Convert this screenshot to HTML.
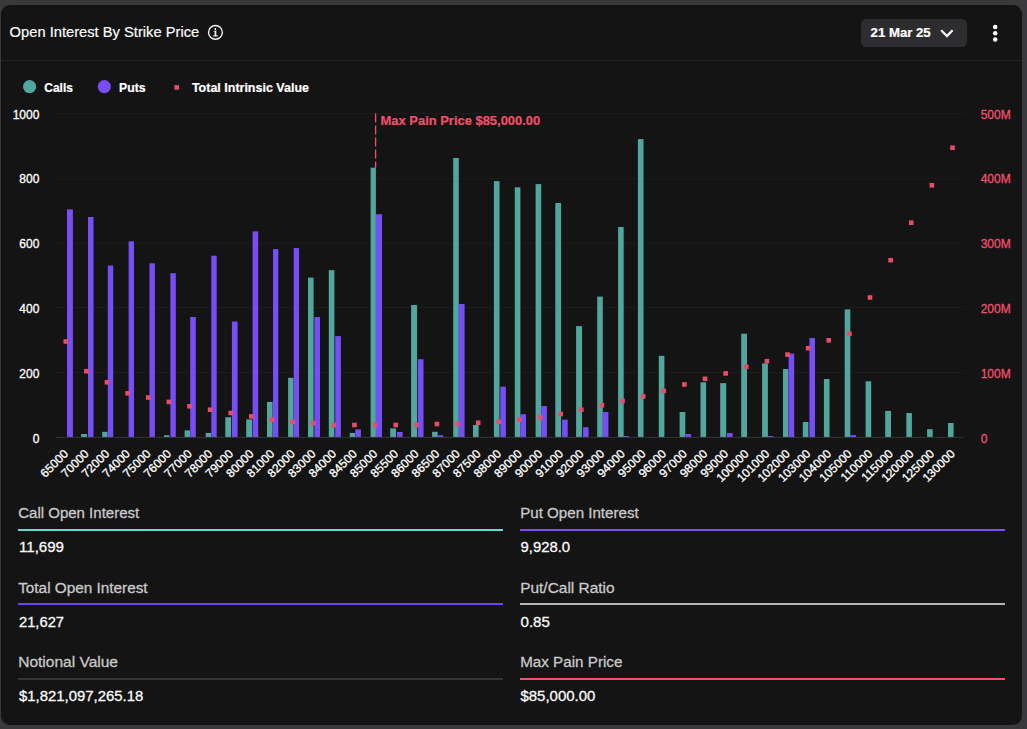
<!DOCTYPE html><html><head><meta charset="utf-8"><title>Open Interest By Strike Price</title>
<style>html,body{margin:0;padding:0;background:#39393b;}body{width:1027px;height:729px;overflow:hidden;font-family:"Liberation Sans",sans-serif;}svg{display:block;font-family:"Liberation Sans",sans-serif;}</style></head><body>
<svg width="1027" height="729" viewBox="0 0 1027 729">
<rect x="0" y="0" width="1027" height="729" fill="#39393b"/>
<rect x="1" y="5" width="1021" height="720" rx="9" ry="9" fill="#141414"/>
<rect x="1" y="60" width="1021" height="1" fill="#232325"/>
<text x="9.6" y="36.7" font-size="15.3" fill="#fafafa" font-weight="normal" text-anchor="start" textLength="189.6" lengthAdjust="spacingAndGlyphs"  stroke="#fafafa" stroke-width="0.2">Open Interest By Strike Price</text>
<g fill="none" stroke="#f2f2f2"><circle cx="215.45" cy="32.4" r="6.9" stroke-width="1.4"/></g>
<g fill="#f2f2f2"><circle cx="215.3" cy="29.0" r="1.0"/><path d="M213.6 30.9 L216.3 30.6 L216.3 35.3 L217.8 35.5 L217.8 36.4 L213.1 36.4 L213.1 35.5 L214.6 35.3 L214.6 31.7 L213.6 31.6 Z"/></g>
<rect x="861" y="19" width="106" height="28" rx="5.5" fill="#2d2d2f"/>
<text x="870.6" y="37.4" font-size="12.6" fill="#fff" font-weight="bold" text-anchor="start" textLength="60.1" lengthAdjust="spacingAndGlyphs"  stroke="#fff" stroke-width="0.2">21 Mar 25</text>
<path d="M941.2 30.3 L946.9 36.1 L952.6 30.3" fill="none" stroke="#fff" stroke-width="2.2" stroke-linecap="butt" stroke-linejoin="miter"/>
<circle cx="995.2" cy="26.9" r="2.25" fill="#fff"/>
<circle cx="995.2" cy="33.2" r="2.25" fill="#fff"/>
<circle cx="995.2" cy="39.6" r="2.25" fill="#fff"/>
<circle cx="29.6" cy="86.6" r="6.6" fill="#51A69E"/>
<text x="44.3" y="92.1" font-size="12.5" fill="#fff" font-weight="bold" text-anchor="start" textLength="28.6" lengthAdjust="spacingAndGlyphs"  stroke="#fff" stroke-width="0.2">Calls</text>
<circle cx="104.3" cy="86.6" r="6.6" fill="#774EF6"/>
<text x="119" y="92.1" font-size="12.5" fill="#fff" font-weight="bold" text-anchor="start" textLength="26.6" lengthAdjust="spacingAndGlyphs"  stroke="#fff" stroke-width="0.2">Puts</text>
<rect x="174.4" y="85.1" width="4.6" height="4.6" fill="#E84C66"/>
<text x="191.9" y="92.1" font-size="12.5" fill="#fff" font-weight="bold" text-anchor="start" textLength="117.1" lengthAdjust="spacingAndGlyphs"  stroke="#fff" stroke-width="0.2">Total Intrinsic Value</text>
<rect x="56.0" y="113.10" width="908.0" height="1" fill="#1d1d1d"/>
<text x="39.4" y="119.0" font-size="12" fill="#ffffff" font-weight="normal" text-anchor="end"  stroke="#ffffff" stroke-width="0.3">1000</text>
<text x="980.7" y="119.3" font-size="12" fill="#F0506C" font-weight="normal" text-anchor="start"  stroke="#F0506C" stroke-width="0.3">500M</text>
<rect x="56.0" y="178.30" width="908.0" height="1" fill="#1d1d1d"/>
<text x="39.4" y="182.9" font-size="12" fill="#ffffff" font-weight="normal" text-anchor="end"  stroke="#ffffff" stroke-width="0.3">800</text>
<text x="980.7" y="182.7" font-size="12" fill="#F0506C" font-weight="normal" text-anchor="start"  stroke="#F0506C" stroke-width="0.3">400M</text>
<rect x="56.0" y="242.80" width="908.0" height="1" fill="#1d1d1d"/>
<text x="39.4" y="248.1" font-size="12" fill="#ffffff" font-weight="normal" text-anchor="end"  stroke="#ffffff" stroke-width="0.3">600</text>
<text x="980.7" y="248.0" font-size="12" fill="#F0506C" font-weight="normal" text-anchor="start"  stroke="#F0506C" stroke-width="0.3">300M</text>
<rect x="56.0" y="307.10" width="908.0" height="1" fill="#1d1d1d"/>
<text x="39.4" y="313.2" font-size="12" fill="#ffffff" font-weight="normal" text-anchor="end"  stroke="#ffffff" stroke-width="0.3">400</text>
<text x="980.7" y="313.3" font-size="12" fill="#F0506C" font-weight="normal" text-anchor="start"  stroke="#F0506C" stroke-width="0.3">200M</text>
<rect x="56.0" y="371.90" width="908.0" height="1" fill="#1d1d1d"/>
<text x="39.4" y="378.1" font-size="12" fill="#ffffff" font-weight="normal" text-anchor="end"  stroke="#ffffff" stroke-width="0.3">200</text>
<text x="980.7" y="378.1" font-size="12" fill="#F0506C" font-weight="normal" text-anchor="start"  stroke="#F0506C" stroke-width="0.3">100M</text>
<text x="39.4" y="442.9" font-size="12" fill="#ffffff" font-weight="normal" text-anchor="end"  stroke="#ffffff" stroke-width="0.3">0</text>
<text x="980.7" y="442.9" font-size="12" fill="#F0506C" font-weight="normal" text-anchor="start"  stroke="#F0506C" stroke-width="0.3">0</text>
<line x1="375.60" y1="113.6" x2="375.60" y2="168" stroke="#F0506C" stroke-width="1.3" stroke-dasharray="9 3"/>
<text x="380.6" y="125.2" font-size="12.5" fill="#F0506C" font-weight="bold" text-anchor="start" textLength="159.6" lengthAdjust="spacingAndGlyphs"  stroke="#F0506C" stroke-width="0.2">Max Pain Price $85,000.00</text>
<rect x="67.00" y="209.4" width="5.90" height="228.00" fill="#774EF6"/>
<rect x="81.10" y="434" width="6.00" height="3.40" fill="#51A69E"/>
<rect x="88.00" y="217" width="5.50" height="220.40" fill="#774EF6"/>
<rect x="102.20" y="431.8" width="5.40" height="5.60" fill="#51A69E"/>
<rect x="107.80" y="265.5" width="5.40" height="171.90" fill="#774EF6"/>
<rect x="128.60" y="241.3" width="5.40" height="196.10" fill="#774EF6"/>
<rect x="149.50" y="263.3" width="5.40" height="174.10" fill="#774EF6"/>
<rect x="163.90" y="435.2" width="5.50" height="2.20" fill="#51A69E"/>
<rect x="170.40" y="273.2" width="5.40" height="164.20" fill="#774EF6"/>
<rect x="184.60" y="430.4" width="5.40" height="7.00" fill="#51A69E"/>
<rect x="190.20" y="317" width="5.60" height="120.40" fill="#774EF6"/>
<rect x="205.70" y="433" width="5.40" height="4.40" fill="#51A69E"/>
<rect x="211.30" y="255.7" width="5.40" height="181.70" fill="#774EF6"/>
<rect x="225.30" y="417.2" width="5.80" height="20.20" fill="#51A69E"/>
<rect x="231.90" y="321.5" width="5.70" height="115.90" fill="#774EF6"/>
<rect x="246.20" y="419.4" width="5.80" height="18.00" fill="#51A69E"/>
<rect x="252.60" y="231.4" width="5.60" height="206.00" fill="#774EF6"/>
<rect x="267.00" y="401.9" width="5.60" height="35.50" fill="#51A69E"/>
<rect x="273.00" y="249.1" width="5.30" height="188.30" fill="#774EF6"/>
<rect x="288.10" y="377.8" width="5.40" height="59.60" fill="#51A69E"/>
<rect x="293.70" y="248.1" width="5.40" height="189.30" fill="#774EF6"/>
<rect x="308.00" y="277.6" width="5.60" height="159.80" fill="#51A69E"/>
<rect x="314.40" y="317.1" width="5.60" height="120.30" fill="#774EF6"/>
<rect x="328.80" y="270.2" width="5.60" height="167.20" fill="#51A69E"/>
<rect x="335.20" y="336.1" width="5.70" height="101.30" fill="#774EF6"/>
<rect x="349.70" y="433" width="5.40" height="4.40" fill="#51A69E"/>
<rect x="355.30" y="429.4" width="5.60" height="8.00" fill="#774EF6"/>
<rect x="370.60" y="167.7" width="5.30" height="269.70" fill="#51A69E"/>
<rect x="375.90" y="214.2" width="6.10" height="223.20" fill="#774EF6"/>
<rect x="390.20" y="428.4" width="5.80" height="9.00" fill="#51A69E"/>
<rect x="397.00" y="432" width="5.60" height="5.40" fill="#774EF6"/>
<rect x="411.10" y="305" width="6.00" height="132.40" fill="#51A69E"/>
<rect x="417.90" y="359.2" width="5.60" height="78.20" fill="#774EF6"/>
<rect x="432.10" y="431.8" width="5.60" height="5.60" fill="#51A69E"/>
<rect x="437.90" y="435.2" width="5.30" height="2.20" fill="#774EF6"/>
<rect x="453.20" y="158" width="5.60" height="279.40" fill="#51A69E"/>
<rect x="459.00" y="304" width="5.60" height="133.40" fill="#774EF6"/>
<rect x="473.00" y="425" width="5.60" height="12.40" fill="#51A69E"/>
<rect x="493.90" y="181.1" width="5.60" height="256.30" fill="#51A69E"/>
<rect x="500.30" y="386.7" width="5.60" height="50.70" fill="#774EF6"/>
<rect x="514.80" y="187.3" width="5.60" height="250.10" fill="#51A69E"/>
<rect x="520.40" y="414.2" width="5.60" height="23.20" fill="#774EF6"/>
<rect x="535.60" y="184.1" width="5.60" height="253.30" fill="#51A69E"/>
<rect x="541.20" y="406.1" width="5.70" height="31.30" fill="#774EF6"/>
<rect x="555.30" y="203" width="5.80" height="234.40" fill="#51A69E"/>
<rect x="562.10" y="419.6" width="5.60" height="17.80" fill="#774EF6"/>
<rect x="576.10" y="326.1" width="5.90" height="111.30" fill="#51A69E"/>
<rect x="583.00" y="427.2" width="5.60" height="10.20" fill="#774EF6"/>
<rect x="597.20" y="296.6" width="5.60" height="140.80" fill="#51A69E"/>
<rect x="602.80" y="412" width="5.60" height="25.40" fill="#774EF6"/>
<rect x="618.10" y="227" width="5.60" height="210.40" fill="#51A69E"/>
<rect x="623.70" y="436" width="5.30" height="1.40" fill="#774EF6"/>
<rect x="637.90" y="139.1" width="5.60" height="298.30" fill="#51A69E"/>
<rect x="658.80" y="355.8" width="5.60" height="81.60" fill="#51A69E"/>
<rect x="679.60" y="412" width="5.70" height="25.40" fill="#51A69E"/>
<rect x="685.50" y="434" width="5.60" height="3.40" fill="#774EF6"/>
<rect x="700.50" y="382.3" width="5.60" height="55.10" fill="#51A69E"/>
<rect x="720.20" y="383.1" width="6.00" height="54.30" fill="#51A69E"/>
<rect x="727.00" y="433" width="5.60" height="4.40" fill="#774EF6"/>
<rect x="741.20" y="333.7" width="5.80" height="103.70" fill="#51A69E"/>
<rect x="762.10" y="363.4" width="5.80" height="74.00" fill="#51A69E"/>
<rect x="767.90" y="436" width="5.50" height="1.40" fill="#774EF6"/>
<rect x="783.00" y="369" width="5.40" height="68.40" fill="#51A69E"/>
<rect x="788.60" y="353.6" width="5.60" height="83.80" fill="#774EF6"/>
<rect x="802.80" y="422" width="5.60" height="15.40" fill="#51A69E"/>
<rect x="809.40" y="338.1" width="5.60" height="99.30" fill="#774EF6"/>
<rect x="823.90" y="379" width="5.60" height="58.40" fill="#51A69E"/>
<rect x="844.70" y="309.4" width="5.60" height="128.00" fill="#51A69E"/>
<rect x="850.30" y="435" width="5.70" height="2.40" fill="#774EF6"/>
<rect x="865.60" y="381.3" width="5.60" height="56.10" fill="#51A69E"/>
<rect x="885.20" y="410.9" width="5.80" height="26.50" fill="#51A69E"/>
<rect x="906.30" y="413" width="5.60" height="24.40" fill="#51A69E"/>
<rect x="927.10" y="429.2" width="5.60" height="8.20" fill="#51A69E"/>
<rect x="948.00" y="423" width="5.60" height="14.40" fill="#51A69E"/>
<rect x="56.0" y="436.9" width="908.0" height="1" fill="#333333"/>
<rect x="63.45" y="339.20" width="4.6" height="4.6" fill="#E84C66"/>
<rect x="84.07" y="368.90" width="4.6" height="4.6" fill="#E84C66"/>
<rect x="104.69" y="380.00" width="4.6" height="4.6" fill="#E84C66"/>
<rect x="125.32" y="391.00" width="4.6" height="4.6" fill="#E84C66"/>
<rect x="145.94" y="395.20" width="4.6" height="4.6" fill="#E84C66"/>
<rect x="166.56" y="399.60" width="4.6" height="4.6" fill="#E84C66"/>
<rect x="187.18" y="404.00" width="4.6" height="4.6" fill="#E84C66"/>
<rect x="207.80" y="407.40" width="4.6" height="4.6" fill="#E84C66"/>
<rect x="228.43" y="410.70" width="4.6" height="4.6" fill="#E84C66"/>
<rect x="249.05" y="414.10" width="4.6" height="4.6" fill="#E84C66"/>
<rect x="269.67" y="417.30" width="4.6" height="4.6" fill="#E84C66"/>
<rect x="290.29" y="419.70" width="4.6" height="4.6" fill="#E84C66"/>
<rect x="310.91" y="420.70" width="4.6" height="4.6" fill="#E84C66"/>
<rect x="331.54" y="422.70" width="4.6" height="4.6" fill="#E84C66"/>
<rect x="352.16" y="422.70" width="4.6" height="4.6" fill="#E84C66"/>
<rect x="372.78" y="422.70" width="4.6" height="4.6" fill="#E84C66"/>
<rect x="393.40" y="422.70" width="4.6" height="4.6" fill="#E84C66"/>
<rect x="414.02" y="422.70" width="4.6" height="4.6" fill="#E84C66"/>
<rect x="434.65" y="421.70" width="4.6" height="4.6" fill="#E84C66"/>
<rect x="455.27" y="421.70" width="4.6" height="4.6" fill="#E84C66"/>
<rect x="475.89" y="420.50" width="4.6" height="4.6" fill="#E84C66"/>
<rect x="496.51" y="419.50" width="4.6" height="4.6" fill="#E84C66"/>
<rect x="517.13" y="417.30" width="4.6" height="4.6" fill="#E84C66"/>
<rect x="537.76" y="415.10" width="4.6" height="4.6" fill="#E84C66"/>
<rect x="558.38" y="411.70" width="4.6" height="4.6" fill="#E84C66"/>
<rect x="579.00" y="407.40" width="4.6" height="4.6" fill="#E84C66"/>
<rect x="599.62" y="403.00" width="4.6" height="4.6" fill="#E84C66"/>
<rect x="620.24" y="398.60" width="4.6" height="4.6" fill="#E84C66"/>
<rect x="640.87" y="394.20" width="4.6" height="4.6" fill="#E84C66"/>
<rect x="661.49" y="388.60" width="4.6" height="4.6" fill="#E84C66"/>
<rect x="682.11" y="382.20" width="4.6" height="4.6" fill="#E84C66"/>
<rect x="702.73" y="376.50" width="4.6" height="4.6" fill="#E84C66"/>
<rect x="723.35" y="371.10" width="4.6" height="4.6" fill="#E84C66"/>
<rect x="743.98" y="364.50" width="4.6" height="4.6" fill="#E84C66"/>
<rect x="764.60" y="358.90" width="4.6" height="4.6" fill="#E84C66"/>
<rect x="785.22" y="352.30" width="4.6" height="4.6" fill="#E84C66"/>
<rect x="805.84" y="345.90" width="4.6" height="4.6" fill="#E84C66"/>
<rect x="826.46" y="338.00" width="4.6" height="4.6" fill="#E84C66"/>
<rect x="847.09" y="331.40" width="4.6" height="4.6" fill="#E84C66"/>
<rect x="867.71" y="295.20" width="4.6" height="4.6" fill="#E84C66"/>
<rect x="888.33" y="257.90" width="4.6" height="4.6" fill="#E84C66"/>
<rect x="908.95" y="220.40" width="4.6" height="4.6" fill="#E84C66"/>
<rect x="929.57" y="183.00" width="4.6" height="4.6" fill="#E84C66"/>
<rect x="950.20" y="145.40" width="4.6" height="4.6" fill="#E84C66"/>
<text transform="translate(65.90 451.5) rotate(-45)" x="0" y="4.3" font-size="12" fill="#fff" stroke="#fff" stroke-width="0.3" text-anchor="end">65000</text>
<text transform="translate(86.52 451.5) rotate(-45)" x="0" y="4.3" font-size="12" fill="#fff" stroke="#fff" stroke-width="0.3" text-anchor="end">70000</text>
<text transform="translate(107.14 451.5) rotate(-45)" x="0" y="4.3" font-size="12" fill="#fff" stroke="#fff" stroke-width="0.3" text-anchor="end">72000</text>
<text transform="translate(127.77 451.5) rotate(-45)" x="0" y="4.3" font-size="12" fill="#fff" stroke="#fff" stroke-width="0.3" text-anchor="end">74000</text>
<text transform="translate(148.39 451.5) rotate(-45)" x="0" y="4.3" font-size="12" fill="#fff" stroke="#fff" stroke-width="0.3" text-anchor="end">75000</text>
<text transform="translate(169.01 451.5) rotate(-45)" x="0" y="4.3" font-size="12" fill="#fff" stroke="#fff" stroke-width="0.3" text-anchor="end">76000</text>
<text transform="translate(189.63 451.5) rotate(-45)" x="0" y="4.3" font-size="12" fill="#fff" stroke="#fff" stroke-width="0.3" text-anchor="end">77000</text>
<text transform="translate(210.25 451.5) rotate(-45)" x="0" y="4.3" font-size="12" fill="#fff" stroke="#fff" stroke-width="0.3" text-anchor="end">78000</text>
<text transform="translate(230.88 451.5) rotate(-45)" x="0" y="4.3" font-size="12" fill="#fff" stroke="#fff" stroke-width="0.3" text-anchor="end">79000</text>
<text transform="translate(251.50 451.5) rotate(-45)" x="0" y="4.3" font-size="12" fill="#fff" stroke="#fff" stroke-width="0.3" text-anchor="end">80000</text>
<text transform="translate(272.12 451.5) rotate(-45)" x="0" y="4.3" font-size="12" fill="#fff" stroke="#fff" stroke-width="0.3" text-anchor="end">81000</text>
<text transform="translate(292.74 451.5) rotate(-45)" x="0" y="4.3" font-size="12" fill="#fff" stroke="#fff" stroke-width="0.3" text-anchor="end">82000</text>
<text transform="translate(313.36 451.5) rotate(-45)" x="0" y="4.3" font-size="12" fill="#fff" stroke="#fff" stroke-width="0.3" text-anchor="end">83000</text>
<text transform="translate(333.99 451.5) rotate(-45)" x="0" y="4.3" font-size="12" fill="#fff" stroke="#fff" stroke-width="0.3" text-anchor="end">84000</text>
<text transform="translate(354.61 451.5) rotate(-45)" x="0" y="4.3" font-size="12" fill="#fff" stroke="#fff" stroke-width="0.3" text-anchor="end">84500</text>
<text transform="translate(375.23 451.5) rotate(-45)" x="0" y="4.3" font-size="12" fill="#fff" stroke="#fff" stroke-width="0.3" text-anchor="end">85000</text>
<text transform="translate(395.85 451.5) rotate(-45)" x="0" y="4.3" font-size="12" fill="#fff" stroke="#fff" stroke-width="0.3" text-anchor="end">85500</text>
<text transform="translate(416.47 451.5) rotate(-45)" x="0" y="4.3" font-size="12" fill="#fff" stroke="#fff" stroke-width="0.3" text-anchor="end">86000</text>
<text transform="translate(437.10 451.5) rotate(-45)" x="0" y="4.3" font-size="12" fill="#fff" stroke="#fff" stroke-width="0.3" text-anchor="end">86500</text>
<text transform="translate(457.72 451.5) rotate(-45)" x="0" y="4.3" font-size="12" fill="#fff" stroke="#fff" stroke-width="0.3" text-anchor="end">87000</text>
<text transform="translate(478.34 451.5) rotate(-45)" x="0" y="4.3" font-size="12" fill="#fff" stroke="#fff" stroke-width="0.3" text-anchor="end">87500</text>
<text transform="translate(498.96 451.5) rotate(-45)" x="0" y="4.3" font-size="12" fill="#fff" stroke="#fff" stroke-width="0.3" text-anchor="end">88000</text>
<text transform="translate(519.58 451.5) rotate(-45)" x="0" y="4.3" font-size="12" fill="#fff" stroke="#fff" stroke-width="0.3" text-anchor="end">89000</text>
<text transform="translate(540.21 451.5) rotate(-45)" x="0" y="4.3" font-size="12" fill="#fff" stroke="#fff" stroke-width="0.3" text-anchor="end">90000</text>
<text transform="translate(560.83 451.5) rotate(-45)" x="0" y="4.3" font-size="12" fill="#fff" stroke="#fff" stroke-width="0.3" text-anchor="end">91000</text>
<text transform="translate(581.45 451.5) rotate(-45)" x="0" y="4.3" font-size="12" fill="#fff" stroke="#fff" stroke-width="0.3" text-anchor="end">92000</text>
<text transform="translate(602.07 451.5) rotate(-45)" x="0" y="4.3" font-size="12" fill="#fff" stroke="#fff" stroke-width="0.3" text-anchor="end">93000</text>
<text transform="translate(622.69 451.5) rotate(-45)" x="0" y="4.3" font-size="12" fill="#fff" stroke="#fff" stroke-width="0.3" text-anchor="end">94000</text>
<text transform="translate(643.32 451.5) rotate(-45)" x="0" y="4.3" font-size="12" fill="#fff" stroke="#fff" stroke-width="0.3" text-anchor="end">95000</text>
<text transform="translate(663.94 451.5) rotate(-45)" x="0" y="4.3" font-size="12" fill="#fff" stroke="#fff" stroke-width="0.3" text-anchor="end">96000</text>
<text transform="translate(684.56 451.5) rotate(-45)" x="0" y="4.3" font-size="12" fill="#fff" stroke="#fff" stroke-width="0.3" text-anchor="end">97000</text>
<text transform="translate(705.18 451.5) rotate(-45)" x="0" y="4.3" font-size="12" fill="#fff" stroke="#fff" stroke-width="0.3" text-anchor="end">98000</text>
<text transform="translate(725.80 451.5) rotate(-45)" x="0" y="4.3" font-size="12" fill="#fff" stroke="#fff" stroke-width="0.3" text-anchor="end">99000</text>
<text transform="translate(746.43 451.5) rotate(-45)" x="0" y="4.3" font-size="12" fill="#fff" stroke="#fff" stroke-width="0.3" text-anchor="end">100000</text>
<text transform="translate(767.05 451.5) rotate(-45)" x="0" y="4.3" font-size="12" fill="#fff" stroke="#fff" stroke-width="0.3" text-anchor="end">101000</text>
<text transform="translate(787.67 451.5) rotate(-45)" x="0" y="4.3" font-size="12" fill="#fff" stroke="#fff" stroke-width="0.3" text-anchor="end">102000</text>
<text transform="translate(808.29 451.5) rotate(-45)" x="0" y="4.3" font-size="12" fill="#fff" stroke="#fff" stroke-width="0.3" text-anchor="end">103000</text>
<text transform="translate(828.91 451.5) rotate(-45)" x="0" y="4.3" font-size="12" fill="#fff" stroke="#fff" stroke-width="0.3" text-anchor="end">104000</text>
<text transform="translate(849.54 451.5) rotate(-45)" x="0" y="4.3" font-size="12" fill="#fff" stroke="#fff" stroke-width="0.3" text-anchor="end">105000</text>
<text transform="translate(870.16 451.5) rotate(-45)" x="0" y="4.3" font-size="12" fill="#fff" stroke="#fff" stroke-width="0.3" text-anchor="end">110000</text>
<text transform="translate(890.78 451.5) rotate(-45)" x="0" y="4.3" font-size="12" fill="#fff" stroke="#fff" stroke-width="0.3" text-anchor="end">115000</text>
<text transform="translate(911.40 451.5) rotate(-45)" x="0" y="4.3" font-size="12" fill="#fff" stroke="#fff" stroke-width="0.3" text-anchor="end">120000</text>
<text transform="translate(932.02 451.5) rotate(-45)" x="0" y="4.3" font-size="12" fill="#fff" stroke="#fff" stroke-width="0.3" text-anchor="end">125000</text>
<text transform="translate(952.65 451.5) rotate(-45)" x="0" y="4.3" font-size="12" fill="#fff" stroke="#fff" stroke-width="0.3" text-anchor="end">130000</text>
<text x="18.2" y="518.3" font-size="15.5" fill="#c9c9c9" font-weight="normal" text-anchor="start" textLength="121" lengthAdjust="spacingAndGlyphs"  stroke="#c9c9c9" stroke-width="0.3">Call Open Interest</text>
<rect x="18" y="529" width="485" height="2" fill="#63DACB"/>
<text x="19" y="551.8" font-size="15" fill="#fafafa" font-weight="normal" text-anchor="start" textLength="45" lengthAdjust="spacingAndGlyphs"  stroke="#fafafa" stroke-width="0.3">11,699</text>
<text x="18.2" y="593.0" font-size="15.5" fill="#c9c9c9" font-weight="normal" text-anchor="start" textLength="129.4" lengthAdjust="spacingAndGlyphs"  stroke="#c9c9c9" stroke-width="0.3">Total Open Interest</text>
<rect x="18" y="603" width="485" height="2" fill="#7041F2"/>
<text x="19" y="627.0" font-size="15" fill="#fafafa" font-weight="normal" text-anchor="start" textLength="45" lengthAdjust="spacingAndGlyphs"  stroke="#fafafa" stroke-width="0.3">21,627</text>
<text x="18.2" y="667.0" font-size="15.5" fill="#c9c9c9" font-weight="normal" text-anchor="start" textLength="99.8" lengthAdjust="spacingAndGlyphs"  stroke="#c9c9c9" stroke-width="0.3">Notional Value</text>
<rect x="18" y="678" width="485" height="2" fill="#353537"/>
<text x="19" y="701.0" font-size="15" fill="#fafafa" font-weight="normal" text-anchor="start" textLength="124.3" lengthAdjust="spacingAndGlyphs"  stroke="#fafafa" stroke-width="0.3">$1,821,097,265.18</text>
<text x="520.2" y="518.3" font-size="15.5" fill="#c9c9c9" font-weight="normal" text-anchor="start" textLength="118.5" lengthAdjust="spacingAndGlyphs"  stroke="#c9c9c9" stroke-width="0.3">Put Open Interest</text>
<rect x="520" y="529" width="485" height="2" fill="#7C4DFF"/>
<text x="520.5" y="551.8" font-size="15" fill="#fafafa" font-weight="normal" text-anchor="start" textLength="49.6" lengthAdjust="spacingAndGlyphs"  stroke="#fafafa" stroke-width="0.3">9,928.0</text>
<text x="520.2" y="593.0" font-size="15.5" fill="#c9c9c9" font-weight="normal" text-anchor="start" textLength="94.4" lengthAdjust="spacingAndGlyphs"  stroke="#c9c9c9" stroke-width="0.3">Put/Call Ratio</text>
<rect x="520" y="603" width="485" height="2" fill="#B2B7B6"/>
<text x="520.5" y="627.0" font-size="15" fill="#fafafa" font-weight="normal" text-anchor="start" textLength="29.4" lengthAdjust="spacingAndGlyphs"  stroke="#fafafa" stroke-width="0.3">0.85</text>
<text x="520.2" y="667.0" font-size="15.5" fill="#c9c9c9" font-weight="normal" text-anchor="start" textLength="102.2" lengthAdjust="spacingAndGlyphs"  stroke="#c9c9c9" stroke-width="0.3">Max Pain Price</text>
<rect x="520" y="678" width="485" height="2" fill="#F0506C"/>
<text x="520.5" y="701.0" font-size="15" fill="#fafafa" font-weight="normal" text-anchor="start" textLength="74.8" lengthAdjust="spacingAndGlyphs"  stroke="#fafafa" stroke-width="0.3">$85,000.00</text>
</svg></body></html>
